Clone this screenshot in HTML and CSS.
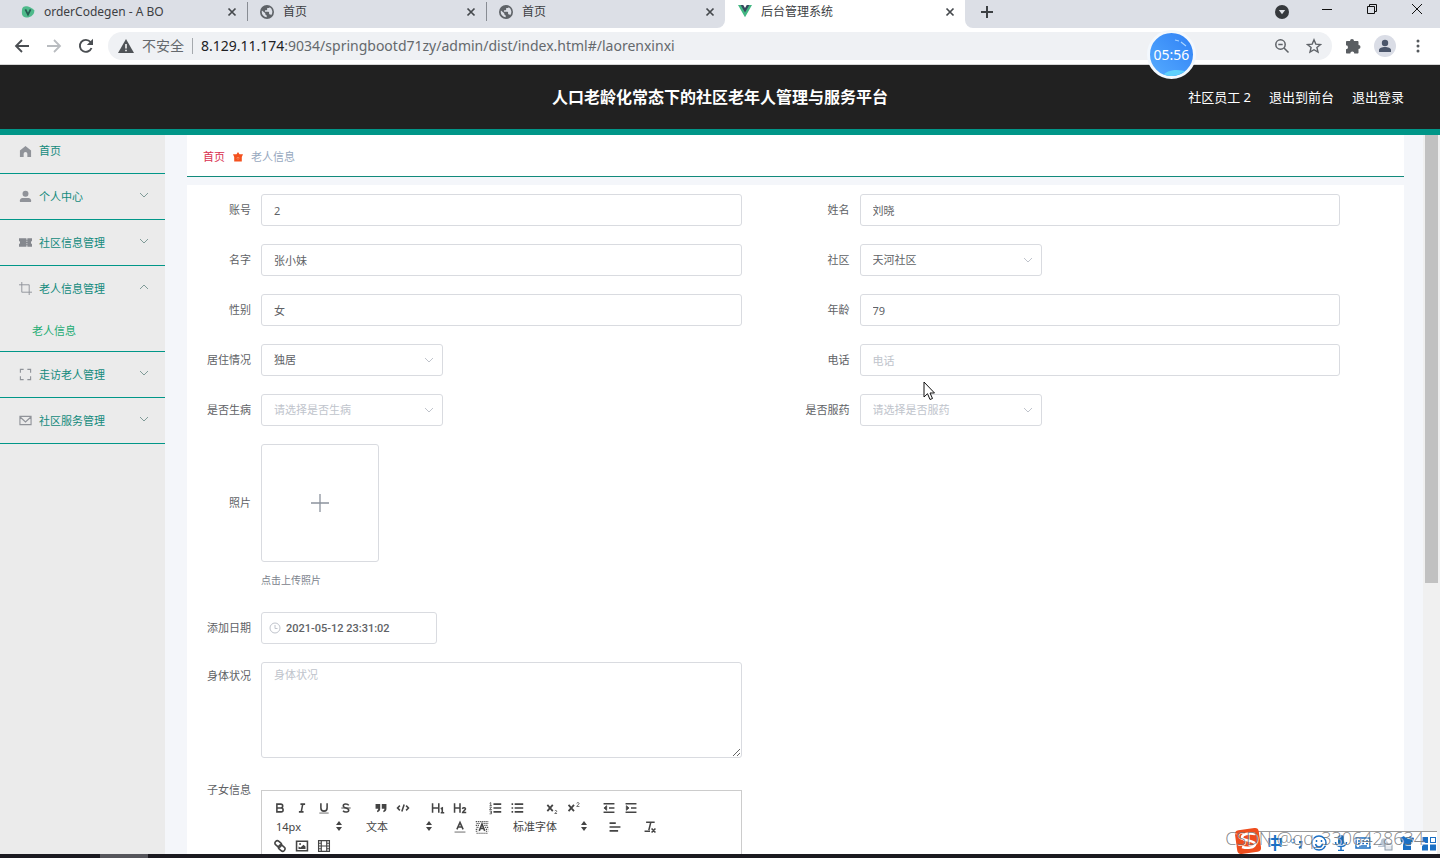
FILE: index.html
```html
<!DOCTYPE html>
<html lang="zh-CN">
<head>
<meta charset="utf-8">
<title>后台管理系统</title>
<link rel="stylesheet" href="styles.css">
</head>
<body>
<svg class="defs" aria-hidden="true">
  <symbol id="globe" viewBox="0 0 24 24"><path fill="#5f6368" d="M12 0a12 12 0 1 0 0 24 12 12 0 0 0 0-24zM3 12c0-1 .1-1.800.4-2.600L9 14v1c0 1.500 1 2.600 2.500 2.600V21A9 9 0 0 1 3 12zm16 5.500c-.4-1-1.300-1.700-2.400-1.700h-1V13c0-.8-.5-1.300-1.200-1.300H8.500V9H11c.7 0 1.300-.6 1.300-1.300V5.300h2.500c1 0 1.700-.6 2-1.300A9 9 0 0 1 19 17.500z"/></symbol>
  <symbol id="x" viewBox="0 0 10 10"><path d="M1.500 1.500l7 7M8.500 1.500l-7 7" stroke="#45494d" stroke-width="1.700"/></symbol>
  <symbol id="chev" viewBox="0 0 10 6"><path d="M1 1l4 4 4-4" fill="none" stroke="currentColor" stroke-width="1"/></symbol>
  <symbol id="updown" viewBox="0 0 6 10"><path d="M0 4L3 0l3 4zM0 6l3 4 3-4z" fill="#444"/></symbol>
</svg>

<div class="tabs">
  <div class="tab"><svg class="fav" viewBox="0 0 16 16"><path d="M3 2C6 0 13 3 15 6c1 3-2 7-6 8S1 13 1 9s0-5.500 2-7z" fill="#4fba8b"/><path d="M5 5l3 6 3-6" fill="none" stroke="#245c50" stroke-width="2"/></svg><span class="tab-name latin">orderCodegen - A BO</span><button class="close" aria-label="关闭"><svg><use href="#x"/></svg></button></div>
  <div class="tab ruled"><svg class="fav"><use href="#globe"/></svg><span class="tab-name">首页</span><button class="close" aria-label="关闭"><svg><use href="#x"/></svg></button></div>
  <div class="tab ruled last"><svg class="fav"><use href="#globe"/></svg><span class="tab-name">首页</span><button class="close" aria-label="关闭"><svg><use href="#x"/></svg></button></div>
  <div class="tab active"><svg class="fav" viewBox="0 0 16 16"><path d="M0 0h4l4 7 4-7h4L8 14z" fill="#43b883"/><path d="M3 0h3l2 3.500L10 0h3L8 8.500z" fill="#35495e"/></svg><span class="tab-name">后台管理系统</span><button class="close" aria-label="关闭"><svg><use href="#x"/></svg></button></div>
  <div class="strip-end">
    <button class="new-tab" aria-label="新标签页"><svg viewBox="0 0 12 12"><path d="M6 0v12M0 6h12" stroke="#3c4043" stroke-width="2"/></svg></button>
    <div class="window-buttons">
      <button aria-label="搜索标签页"><svg viewBox="0 0 14 14"><circle cx="7" cy="7" r="7" fill="#36393d"/><path d="M3.800 5h6.400L7 9.300z" fill="#dee1e6"/></svg></button>
      <button class="raised" aria-label="最小化"><svg viewBox="0 0 14 14"><path d="M2 7.500h10" stroke="#111"/></svg></button>
      <button class="raised" aria-label="还原"><svg viewBox="0 0 14 14"><path d="M2.500 4.500h7v7h-7zM4.500 4V2.500h7v7H10" fill="none" stroke="#111"/></svg></button>
      <button class="raised" aria-label="关闭窗口"><svg viewBox="0 0 14 14"><path d="M2 2l10 10M12 2L2 12" stroke="#111"/></svg></button>
    </div>
  </div>
</div>

<div class="toolbar">
  <button class="nav" aria-label="后退"><svg viewBox="0 0 16 16"><path d="M15 8H2M8 2L2 8l6 6" fill="none" stroke="#4a4e52" stroke-width="1.800"/></svg></button>
  <button class="nav" aria-label="前进"><svg viewBox="0 0 16 16"><path d="M1 8h13M8 2l6 6-6 6" fill="none" stroke="#b9bcc0" stroke-width="1.800"/></svg></button>
  <button class="nav" aria-label="刷新"><svg viewBox="0 0 16 16"><path d="M13.500 10A6 6 0 1 1 12.500 4" fill="none" stroke="#4a4e52" stroke-width="1.900"/><path d="M15 .8V7H8.800z" fill="#4a4e52"/></svg></button>
  <div class="address">
    <svg class="warn" viewBox="0 0 16 14"><path d="M8 0l8 14H0z" fill="#4f5357"/><path d="M8 5v4.500M8 10.800v1.500" stroke="#fff" stroke-width="1.500"/></svg>
    <span class="insecure">不安全</span>
    <span class="url"><b>8.129.11.174</b>:9034/springbootd71zy/admin/dist/index.html#/laorenxinxi</span>
    <svg class="tool" viewBox="0 0 16 16"><circle cx="6.500" cy="6.500" r="4.700" fill="none" stroke="#5f6368" stroke-width="1.500"/><path d="M10 10l4.500 4.500M4.300 6.500h4.400" stroke="#5f6368" stroke-width="1.500"/></svg>
    <svg class="tool" viewBox="0 0 16 16"><path d="M8 1.800l1.800 4.300 4.700.4-3.600 3 1.100 4.600L8 11.700l-4 2.400 1.100-4.600-3.600-3 4.700-.4z" fill="none" stroke="#5f6368" stroke-width="1.400"/></svg>
  </div>
  <button class="ext" aria-label="扩展程序"><svg viewBox="0 0 16 16"><path d="M5 3a2 2 0 0 1 4 0h3.500c.6 0 1 .5 1 1v3a2 2 0 0 1 0 4v3.500c0 .6-.4 1-1 1H9.300a2 2 0 0 0-4 0H2c-.6 0-1-.4-1-1v-3.300a2 2 0 0 0 0-4V4c0-.5.4-1 1-1z" fill="#5a5e62"/></svg></button>
  <button class="profile" aria-label="用户"><svg viewBox="0 0 14 14"><circle cx="7" cy="4" r="3.200" fill="#4b566b"/><path d="M1 13v-2c0-2 3-3 6-3s6 1 6 3v2z" fill="#4b566b"/></svg></button>
  <button class="more" aria-label="更多"><svg viewBox="0 0 4 14"><circle cx="2" cy="2" r="1.500"/><circle cx="2" cy="7" r="1.500"/><circle cx="2" cy="12" r="1.500"/></svg></button>
</div>

<header class="header">
  <h1>人口老龄化常态下的社区老年人管理与服务平台</h1>
  <nav class="account"><a href="#">社区员工 2</a><a href="#">退出到前台</a><a href="#">退出登录</a></nav>
</header>

<div class="body">
  <nav class="side">
    <a class="item first" href="#"><svg class="ico" viewBox="0 0 14 14"><path d="M7 1l6 5v7H9V9.500a2 2 0 0 0-4 0V13H1V6z" fill="#909399"/></svg><span>首页</span></a>
    <a class="item" href="#"><svg class="ico" viewBox="0 0 14 14"><circle cx="7" cy="4" r="3.200" fill="#909399"/><path d="M1 13v-2c0-2 2-2.500 3.500-2.500h5c1.500 0 3.500.5 3.500 2.500v2z" fill="#909399"/></svg><span>个人中心</span><svg class="chev"><use href="#chev"/></svg></a>
    <a class="item" href="#"><svg class="ico" viewBox="0 0 14 14"><path d="M0 2.500h8V4h1V2.500h5v2.700a2 2 0 0 0 0 3.600v2.700H9V10H8v1.500H0V8.800a2 2 0 0 0 0-3.600zM8 5v1.300h1V5zm0 2.700V9h1V7.700z" fill="#85888e"/></svg><span>社区信息管理</span><svg class="chev"><use href="#chev"/></svg></a>
    <div class="group">
      <a class="item open" href="#"><svg class="ico" viewBox="0 0 14 14"><path d="M3 0v11h11M0 3h11v11" fill="none" stroke="#909399"/></svg><span>老人信息管理</span><svg class="chev up"><use href="#chev"/></svg></a>
      <a class="sub" href="#">老人信息</a>
    </div>
    <a class="item" href="#"><svg class="ico" viewBox="0 0 14 14"><path d="M1.500 5V1.500H5M9 1.500h3.500V5M12.500 9v3.500H9M5 12.500H1.500V9" fill="none" stroke="#909399" stroke-width="1.200"/></svg><span>走访老人管理</span><svg class="chev"><use href="#chev"/></svg></a>
    <a class="item" href="#"><svg class="ico" viewBox="0 0 14 14"><path d="M1 2.500h12v9H1zM1.500 3.500L7 8.500l5.500-5" fill="none" stroke="#909399" stroke-width="1.200"/></svg><span>社区服务管理</span><svg class="chev"><use href="#chev"/></svg></a>
  </nav>

  <main class="main">
    <div class="crumbs"><a href="#">首页</a><svg viewBox="0 0 10 10"><path d="M5 0l1.500 2.200H10L8.800 5v4.500H1.200V5L0 2.200h3.500z" fill="#f4511e"/><path d="M3.500 6.200l1.500-1 1.500 1M5 6.200v1.600" fill="none" stroke="#f8a07c" stroke-width=".7"/></svg><span>老人信息</span></div>
    <form class="form">
      <div class="row"><label for="f1">账号</label><input class="box wide" id="f1" value="2"></div>
      <div class="row"><label for="f2">姓名</label><input class="box wide" id="f2" value="刘晓"></div>
      <div class="row"><label for="f3">名字</label><input class="box wide" id="f3" value="张小妹"></div>
      <div class="row"><label for="f4">社区</label><div class="pick"><select class="box" id="f4"><option>天河社区</option></select><svg><use href="#chev"/></svg></div></div>
      <div class="row"><label for="f5">性别</label><input class="box wide" id="f5" value="女"></div>
      <div class="row"><label for="f6">年龄</label><input class="box wide" id="f6" value="79"></div>
      <div class="row"><label for="f7">居住情况</label><div class="pick"><select class="box" id="f7"><option>独居</option></select><svg><use href="#chev"/></svg></div></div>
      <div class="row"><label for="f8">电话</label><input class="box wide" id="f8" placeholder="电话"></div>
      <div class="row"><label for="f9">是否生病</label><div class="pick"><select class="box blank" id="f9"><option>请选择是否生病</option></select><svg><use href="#chev"/></svg></div></div>
      <div class="row"><label for="f10">是否服药</label><div class="pick"><select class="box blank" id="f10"><option>请选择是否服药</option></select><svg><use href="#chev"/></svg></div></div>
      <div class="row full"><label class="photo-label" for="f11">照片</label><div><button type="button" class="upload" id="f11" aria-label="上传照片"><svg viewBox="0 0 18 18"><path d="M9 0v18M0 9h18" stroke="#8c939d" stroke-width="1.300"/></svg></button><p class="tip">点击上传照片</p></div></div>
      <div class="row full"><label for="f12">添加日期</label><div class="date"><svg viewBox="0 0 12 12"><circle cx="6" cy="6" r="5" fill="none" stroke="#c0c4cc"/><path d="M6 3v3.500h2.500" fill="none" stroke="#c0c4cc"/></svg><input class="box" id="f12" value="2021-05-12 23:31:02"></div></div>
      <div class="row"><label for="f13">身体状况</label><textarea class="box wide" id="f13" placeholder="身体状况"></textarea></div>
      <div class="row editor-row"><label id="ed">子女信息</label>
        <div class="editor wide" role="group" aria-labelledby="ed">
          <span class="fmt">
            <button type="button" aria-label="粗体"><svg viewBox="0 0 18 18"><path d="M5 4h5a2.500 2.500 0 0 1 0 5H5zM5 9h5.500a2.500 2.500 0 0 1 0 5H5z"/></svg></button>
            <button type="button" aria-label="斜体"><svg viewBox="0 0 18 18"><path d="M7 4h6M5 14h6M8 14l2-10"/></svg></button>
            <button type="button" aria-label="下划线"><svg viewBox="0 0 18 18"><path d="M5 3v6a4 4 0 0 0 8 0V3"/><path d="M3 15.500h12" stroke-width="1"/></svg></button>
            <button type="button" aria-label="删除线"><svg viewBox="0 0 18 18"><path d="M12.500 5.500C11 3 5.500 3.300 5.500 6c0 1.500 1 2.300 3.500 3s3.500 1.500 3.500 3c0 2.700-5.500 3-7.300.5"/><path d="M3 9h12" stroke-width="1.200"/></svg></button>
          </span>
          <span class="fmt">
            <button type="button" aria-label="引用"><svg class="solid" viewBox="0 0 18 18"><path d="M2 4h6v6c0 2-1.500 4-4 4.500v-2c1-.5 1.500-1.500 1.500-2.500H2zM10 4h6v6c0 2-1.500 4-4 4.500v-2c1-.5 1.500-1.500 1.500-2.500H10z"/></svg></button>
            <button type="button" aria-label="代码"><svg viewBox="0 0 18 18"><path d="M5 6L2 9l3 3M13 6l3 3-3 3M10.500 4.500l-3 9"/></svg></button>
          </span>
          <span class="fmt">
            <button type="button" aria-label="标题1"><svg viewBox="0 0 18 18"><path d="M2 3v12M10 3v12M2 9h8M12.500 10l2-1v6M12.500 15H17"/></svg></button>
            <button type="button" aria-label="标题2"><svg viewBox="0 0 18 18"><path d="M2 3v12M9 3v12M2 9h7M12 10c1-2 4.500-1.500 4 .5-.3 1.200-3 2.500-3.500 4.200H17"/></svg></button>
          </span>
          <span class="fmt">
            <button type="button" aria-label="有序列表"><svg viewBox="0 0 18 18"><path d="M7 4h10M7 9h10M7 14h10"/><path d="M2 3l1.500-1v4M2 6h3M2 8h2.500L2 11h3M2 13h2.500v3.500H2M3 14.700h1.500" stroke-width="1"/></svg></button>
            <button type="button" aria-label="无序列表"><svg viewBox="0 0 18 18"><path d="M6 4h11M6 9h11M6 14h11M2 4h2M2 9h2M2 14h2"/></svg></button>
          </span>
          <span class="fmt">
            <button type="button" aria-label="下标"><svg viewBox="0 0 18 18"><path d="M3 5l7 8M10 5l-7 8" stroke-width="2.300"/><path d="M12.500 13c.5-1.300 3-1 2.500.5-.3.800-2 1.500-2.500 2.500h3" stroke-width="1"/></svg></button>
            <button type="button" aria-label="上标"><svg viewBox="0 0 18 18"><path d="M2 5l7 8M9 5l-7 8" stroke-width="2.300"/><path d="M12.500 3c.5-1.500 3.500-1.200 3 .7C15.200 4.700 13 5.500 12.500 7H16" stroke-width="1"/></svg></button>
          </span>
          <span class="fmt">
            <button type="button" aria-label="减少缩进"><svg viewBox="0 0 18 18"><path d="M2 3.500h14M9 9h7M2 14.500h14"/><path d="M6 6v6L2.500 9z" fill="#444" stroke-width="1"/></svg></button>
            <button type="button" aria-label="增加缩进"><svg viewBox="0 0 18 18"><path d="M2 3.500h14M9 9h7M2 14.500h14"/><path d="M3 6v6l3.500-3z" fill="#444" stroke-width="1"/></svg></button>
          </span>
          <span class="fmt"><span class="mini"><select aria-label="字号"><option>14px</option></select><svg><use href="#updown"/></svg></span></span>
          <span class="fmt"><span class="mini"><select aria-label="段落"><option>文本</option></select><svg><use href="#updown"/></svg></span></span>
          <span class="fmt">
            <button type="button" aria-label="文字颜色"><svg viewBox="0 0 18 18"><path d="M5 12l4-9 4 9M6.500 9h5"/><path d="M2 15.500h14" stroke-width="1"/></svg></button>
            <button type="button" aria-label="背景颜色"><svg viewBox="0 0 18 18"><path d="M1 2h16M2 4.500h5M11 4.500h6M1 7h5M12 7h5M2 9.500h3M13 9.500h4M1 12h3M14 12h3M1 14.500h3M14 14.500h3M2 17h15" stroke-width="1.500" stroke-dasharray="1.500 1"/><path d="M5.500 14L9 5l3.500 9M7 11h4"/></svg></button>
          </span>
          <span class="fmt"><span class="mini font"><select aria-label="字体"><option>标准字体</option></select><svg><use href="#updown"/></svg></span></span>
          <span class="fmt"><button type="button" aria-label="对齐"><svg viewBox="0 0 18 18"><path d="M2 4h8M2 9h14M2 14h11"/></svg></button></span>
          <span class="fmt"><button type="button" aria-label="清除格式"><svg viewBox="0 0 18 18"><path d="M4 3h11M10 3L7.500 13M2 14.500h7M11 11l5 5M16 11l-5 5"/></svg></button></span>
          <span class="fmt">
            <button type="button" aria-label="链接"><svg viewBox="0 0 18 18"><g transform="rotate(42 9 9)"><rect x="1" y="5.500" width="9" height="6" rx="3"/><rect x="8" y="6.500" width="9" height="6" rx="3"/></g></svg></button>
            <button type="button" aria-label="图片"><svg viewBox="0 0 18 18"><path d="M2 3h14v12H2z"/><path d="M4.500 13V9.500L7 11l4-3.500 2.500 2V13z" fill="#444" stroke="none"/><circle cx="6.500" cy="6.500" r="1.200" fill="#444" stroke="none"/></svg></button>
            <button type="button" aria-label="视频"><svg viewBox="0 0 18 18"><path d="M2 2h14v14H2zM5.500 2v14M12.500 2v14M5.500 9h7M2 5.500h3M2 9h3M2 12.500h3M13 5.500h3M13 9h3M13 12.500h3" stroke-width="1.500"/></svg></button>
          </span>
        </div>
      </div>
    </form>
  </main>
  <div class="track"><div class="thumb"></div></div>
</div>
<div class="taskbar"><span></span></div>

<div class="timer"><svg viewBox="0 0 43 43"><path d="M12 43c5-6 14-8 26-4v4z" fill="#5ed0fb"/><path d="M25 7l4 1M31 9l5 4" stroke="#a9d4ff" stroke-width="1.200"/></svg><span>05:56</span></div>
<svg class="cursor" viewBox="0 0 12 20"><path d="M1 1v15l3.500-3.300L7 18.500l2.500-1L7 12h4.500z" fill="#fff" stroke="#111"/></svg>
<div class="ime">
  <svg class="sogou" viewBox="0 0 28 28"><rect x="2" y="2" width="24" height="24" rx="4" fill="#ee4d1d" transform="rotate(-8 14 14)"/><path d="M21 7c-6-1-13 0-13 3.500S21 13 21 17s-8 4.500-13 3" fill="none" stroke="#fff" stroke-width="2.500"/></svg>
  <span class="zh">中</span>
  <svg viewBox="0 0 16 16"><circle cx="4" cy="6" r="2" fill="none" stroke="#1a6fc4"/><path d="M10 7h3c0 3-1 5-3 6" fill="none" stroke="#1a6fc4" stroke-width="2"/></svg>
  <svg viewBox="0 0 16 16"><circle cx="8" cy="8" r="7" fill="none" stroke="#1a6fc4" stroke-width="1.500"/><path d="M5.500 5v2M10.500 5v2M4.500 9c1 4 6 4 7 0" fill="none" stroke="#1a6fc4" stroke-width="1.500"/></svg>
  <svg viewBox="0 0 16 16"><rect x="5" y="0" width="6" height="10" rx="3" fill="#1a6fc4"/><path d="M2.500 7c0 6 11 6 11 0M8 12v4M5 15.500h6" fill="none" stroke="#1a6fc4" stroke-width="1.500"/></svg>
  <svg viewBox="0 0 16 16"><path d="M1 3h14v10H1zM3 6h2M7 6h2M11 6h2M3 8.500h2M7 8.500h2M11 8.500h2M4 11h8" fill="none" stroke="#1a6fc4" stroke-width="1.500"/></svg>
  <svg viewBox="0 0 16 16"><path d="M1 12c0-3 3-3 3-6s5-4 6 0l3 6z" fill="#b8c5d4"/><rect x="8" y="9" width="7" height="6" fill="#e5e9ee" stroke="#8999aa"/></svg>
  <svg viewBox="0 0 16 16"><path d="M1 3l4-2c1 2 5 2 6 0l4 2-1 4h-2v8H4V7H2z" fill="#1a6fc4"/></svg>
  <svg viewBox="0 0 16 16"><path d="M1 2h6v6H1zM1 9.500h6v6H1zM9 9.500h6v6H9z" fill="#1a6fc4"/><rect x="9.500" y="2.500" width="5" height="5" fill="none" stroke="#1a6fc4"/></svg>
</div>
<div class="mark">CSDN @qq_3306428634</div>
</body>
</html>
```
FILE: styles.css
```css
* { box-sizing: border-box; }
body {
  margin: 0;
  height: 100vh;
  display: flex;
  flex-direction: column;
  overflow: hidden;
  position: relative;
  background: #fff;
  color: #606266;
  font: 11px/16px "Noto Sans", "Noto Sans CJK SC", sans-serif;
}
button, input, select, textarea { font: inherit; color: inherit; }
button { border: 0; padding: 0; background: none; display: flex; align-items: center; justify-content: center; }
a { color: inherit; text-decoration: none; }
svg { display: block; flex: none; }
.defs { position: absolute; width: 0; height: 0; }

.tabs { display: flex; height: 28px; background: #fff; flex: none; }
.tabs::before { content: ""; width: 8px; background: #dcdfe6; }
.tab {
  width: 239px;
  display: flex;
  align-items: center;
  gap: 9px;
  padding: 0 10px 4px 13px;
  background: #dcdfe6;
  color: #3c4043;
  font-size: 12px;
  position: relative;
}
.tab.ruled::before { content: ""; position: absolute; left: 0; top: 2px; width: 1px; height: 19px; background: #888c93; }
.tab.last { border-bottom-right-radius: 8px; }
.tab.active { background: #fff; width: 240px; }
.tab-name { flex: 1; }
.latin { font-family: "Noto Sans", sans-serif; }
.fav { width: 14px; height: 14px; }
.close svg { width: 10px; height: 10px; }
.strip-end {
  flex: 1;
  display: flex;
  justify-content: space-between;
  background: #dcdfe6;
  border-bottom-left-radius: 8px;
  padding: 0 16px 5px;
}
.new-tab svg { width: 12px; height: 12px; }
.window-buttons { display: flex; gap: 31px; }
.window-buttons svg { width: 14px; height: 14px; }
.window-buttons .raised { padding-bottom: 6px; }

.toolbar {
  flex: none;
  height: 37px;
  display: flex;
  align-items: center;
  padding: 0 16px 0 14px;
  border-bottom: 1px solid #d6d6d6;
  background: #fff;
}
.nav { width: 16px; margin-right: 16px; }
.nav svg { width: 16px; height: 16px; }
.address {
  flex: 1;
  display: flex;
  align-items: center;
  height: 28px;
  margin: 0 13px 0 -2px;
  padding: 0 10px;
  border-radius: 14px;
  background: #eff1f4;
  color: #65696d;
  font-size: 14px;
}
.warn { width: 16px; height: 14px; margin-right: 8px; }
.insecure { padding-right: 8px; border-right: 1px solid #a5a9ad; margin-right: 8px; }
.url { flex: 1; font-family: "Noto Sans", sans-serif; }
.url b { font-weight: 400; color: #202124; }
.tool { width: 16px; height: 16px; margin-left: 16px; }
.ext svg { width: 16px; height: 16px; }
.profile { width: 22px; height: 22px; margin: 0 20px 0 13px; border-radius: 50%; background: #dadde6; }
.profile svg { width: 14px; height: 14px; }
.more { width: 4px; margin-right: 4px; }
.more svg { width: 4px; height: 14px; fill: #55595d; }

.header {
  flex: none;
  display: grid;
  grid-template-columns: 1fr auto 1fr;
  align-items: center;
  height: 70px;
  padding: 0 36px;
  background: #212121;
  border-bottom: 6px solid #009688;
  color: #fff;
}
.header h1 { grid-column: 2; margin: 0; font-size: 16px; line-height: 24px; }
.account { display: flex; justify-content: flex-end; gap: 18px; font-size: 13px; }

.body { flex: 1; min-height: 0; display: flex; background: #f4f6fa; }
.side { width: 165px; flex: none; background: #ebebeb; color: #128a7c; }
.item {
  display: flex;
  align-items: center;
  gap: 7px;
  height: 46px;
  padding: 0 16px 0 19px;
  border-bottom: 1px solid #009688;
}
.item span { flex: 1; }
.item.first { height: 39px; padding-bottom: 6px; }
.item.open { height: 45px; border: 0; }
.ico { width: 13px; height: 13px; }
.chev { width: 10px; height: 6px; margin-bottom: 4px; color: #7f9b98; }
.up { transform: rotate(180deg); }
.group { border-bottom: 1px solid #009688; }
.sub { display: block; padding-left: 32px; line-height: 40px; color: #1cab73; }

.main { flex: 1; min-width: 0; padding: 0 19px 0 22px; overflow: hidden; }
.crumbs {
  display: flex;
  align-items: center;
  gap: 8px;
  height: 42px;
  padding: 2px 16px 0;
  background: #fff;
  border-bottom: 1px solid #128a7c;
  color: #97a8be;
}
.crumbs a { color: #d9304f; }
.crumbs svg { width: 10px; height: 10px; }
.form {
  display: grid;
  grid-template-columns: 1fr 1fr;
  row-gap: 18px;
  margin-top: 8px;
  padding: 9px 10px 80px;
  background: #fff;
}
.row { display: flex; gap: 10px; min-width: 0; }
.row.full { grid-column: 1 / -1; }
.row label { width: 54px; flex: none; text-align: right; line-height: 32px; }
.box {
  display: block;
  width: 182px;
  height: 32px;
  margin: 0;
  padding: 0 12px;
  border: 1px solid #d9dbe0;
  border-radius: 3px;
  background: #fff;
  appearance: none;
  outline: 0;
}
.wide { flex: 1; width: auto; min-width: 0; margin-right: 54px; }
.box::placeholder { color: #c0c4cc; }
.blank { color: #c0c4cc; }
.pick { position: relative; }
.pick svg { position: absolute; right: 9px; top: 13px; width: 10px; height: 6px; color: #c0c4cc; }
.row .photo-label { line-height: 118px; }
.upload { width: 118px; height: 118px; border: 1px solid #d9dbe0; border-radius: 3px; }
.upload svg { width: 18px; height: 18px; }
.tip { margin: 4px 0 0; font-size: 10px; line-height: 28px; color: #7b828c; }
.date { position: relative; }
.date .box { width: 176px; padding-left: 24px; font-family: Roboto, sans-serif; font-weight: 500; }
.date svg { position: absolute; left: 8px; top: 10px; width: 12px; height: 12px; }
textarea.box { height: 96px; padding: 4px 12px; resize: vertical; }
.row:has(textarea) label { line-height: 28px; }
.editor-row { margin-top: 14px; grid-column: 1; }
.editor-row label { line-height: 0; }
.editor {
  display: flex;
  flex-wrap: wrap;
  align-content: flex-start;
  height: 200px;
  padding: 7px;
  border: 1px solid #ccc;
}
.fmt { display: flex; margin-right: 13px; height: 19px; }
.fmt button { width: 22px; height: 19px; }
.fmt button svg { width: 14px; height: 14px; fill: none; stroke: #444; stroke-width: 2; }
.fmt button .solid { fill: #444; stroke: none; }
.mini { position: relative; width: 77px; color: #444; }
.mini.font { width: 85px; }
.mini select { appearance: none; width: 100%; height: 19px; padding: 0 7px; border: 0; background: none; }
.mini svg { position: absolute; right: 4px; top: 4px; width: 6px; height: 10px; }

.track { width: 17px; flex: none; padding: 0 2px; background: #f0f0f0; }
.thumb { height: 62.3%; background: #c1c1c1; }
.taskbar { flex: none; height: 4px; padding-left: 100px; background: #1b1a20; }
.taskbar span { display: block; width: 48px; height: 4px; background: #55555b; }

.timer {
  position: absolute;
  left: 1147px;
  top: 30px;
  width: 49px;
  height: 49px;
  border: 3px solid #f3f8fd;
  border-radius: 50%;
  overflow: hidden;
  background: linear-gradient(225deg, #2f80f5, #55abff);
  color: #fff;
  font: 14px/43px "Noto Sans", sans-serif;
  display: grid;
  justify-items: center;
}
.timer > * { grid-area: 1 / 1; }
.timer svg { width: 43px; height: 43px; fill: none; }
.cursor { position: absolute; left: 923px; top: 381px; width: 12px; height: 20px; }
.ime {
  position: absolute;
  right: 3px;
  bottom: 4px;
  height: 23px;
  padding-left: 29px;
  display: flex;
  align-items: center;
  gap: 6px;
  background: #fff;
  border-top: 1px solid #999;
}
.ime svg { width: 16px; height: 16px; }
.ime .sogou { position: absolute; left: -4px; top: -5px; width: 28px; height: 28px; }
.zh { color: #1a6fc4; font-size: 16px; font-weight: 700; }
.mark {
  position: absolute;
  right: 16px;
  bottom: 8px;
  color: rgba(110, 112, 116, .85);
  font: 300 18px/24px "Open Sans", "Noto Sans", sans-serif;
  text-shadow: 1px 1px 0 rgba(255, 255, 255, .8);
}
```
